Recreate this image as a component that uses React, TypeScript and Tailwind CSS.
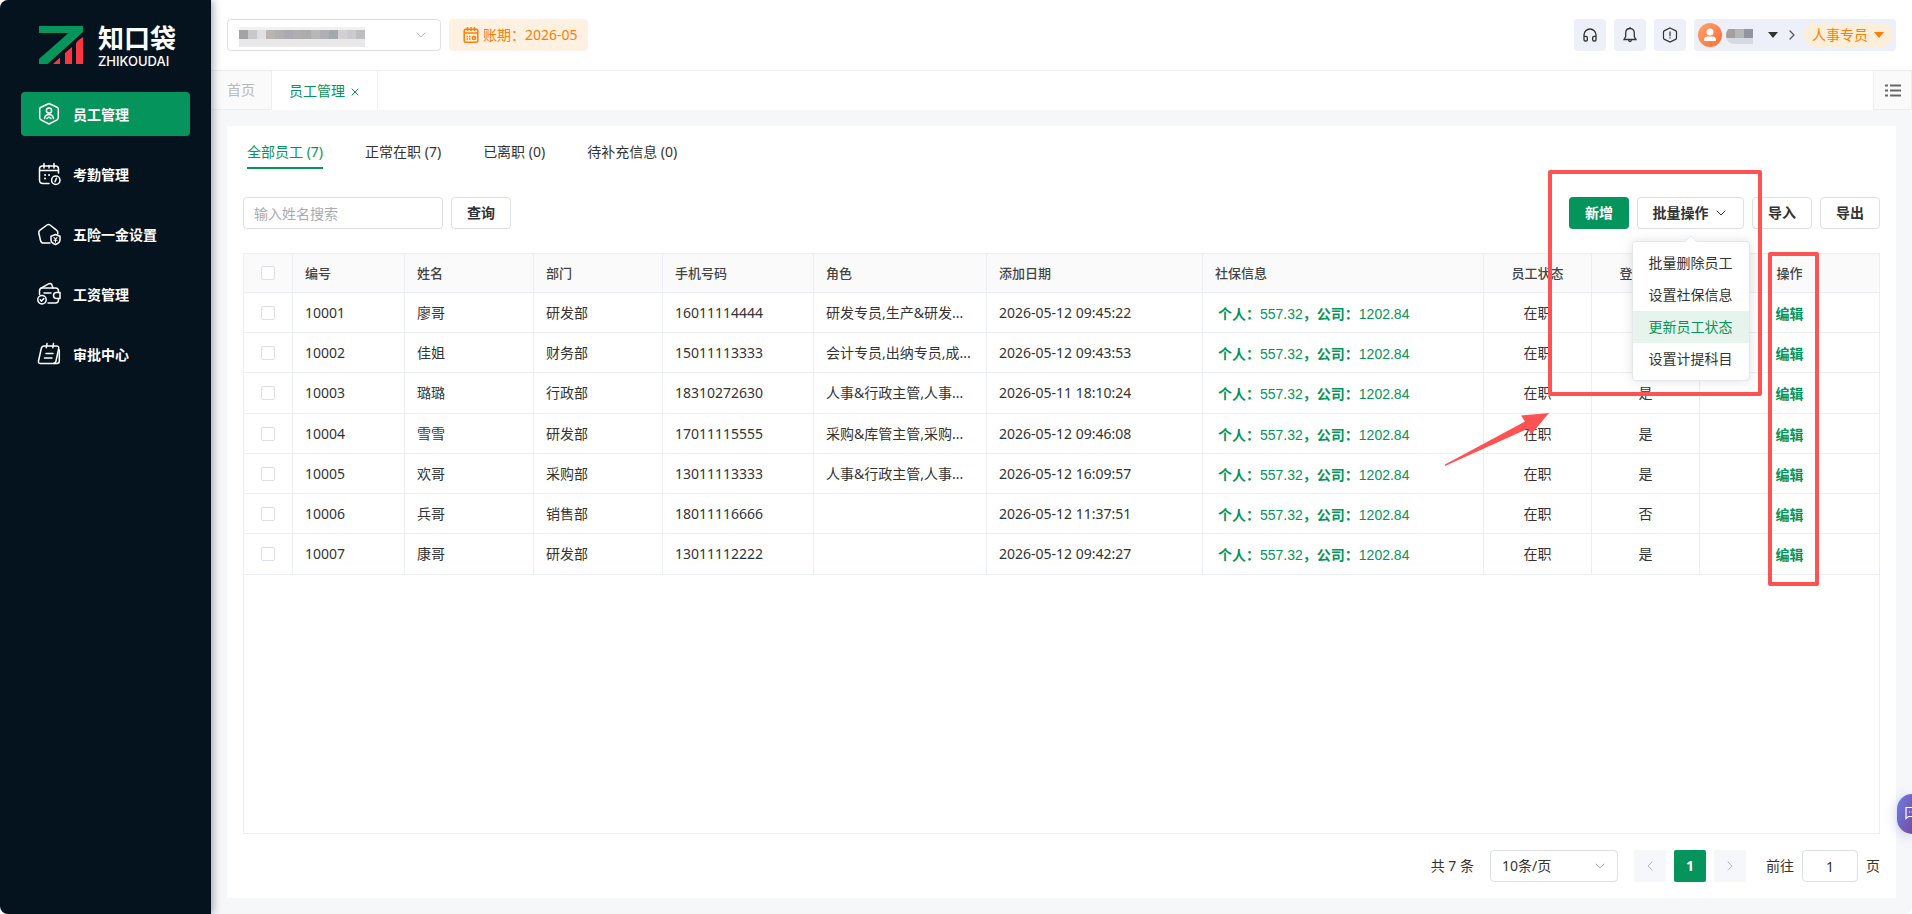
import type { ReactNode } from 'react';
import { ChevronDown, ChevronLeft, ChevronRight, Headphones, X } from 'lucide-react';

const NAME_MOSAIC = [
  '#a3a3a5', '#c8c8ca', '#e0e0e2', '#b8b4b0', '#b0b0b2', '#acaab0', '#b0aeb0',
  '#acacae', '#b8b6b6', '#b0b0b4', '#a4a8ac', '#d2d0d0', '#cccace', '#bebec2',
];

const STATUS_TABS = ['全部员工 (7)', '正常在职 (7)', '已离职 (0)', '待补充信息 (0)'];
const BATCH_ACTIONS = ['批量删除员工', '设置社保信息', '更新员工状态', '设置计提科目'];

type Employee = {
  id: string;
  name: string;
  dept: string;
  phone: string;
  role: string;
  addedAt: string;
  login: string;
};

const EMPLOYEES: Employee[] = [
  { id: '10001', name: '廖哥', dept: '研发部', phone: '16011114444', role: '研发专员,生产&研发...', addedAt: '2026-05-12 09:45:22', login: '是' },
  { id: '10002', name: '佳姐', dept: '财务部', phone: '15011113333', role: '会计专员,出纳专员,成...', addedAt: '2026-05-12 09:43:53', login: '是' },
  { id: '10003', name: '璐璐', dept: '行政部', phone: '18310272630', role: '人事&行政主管,人事...', addedAt: '2026-05-11 18:10:24', login: '是' },
  { id: '10004', name: '雪雪', dept: '研发部', phone: '17011115555', role: '采购&库管主管,采购...', addedAt: '2026-05-12 09:46:08', login: '是' },
  { id: '10005', name: '欢哥', dept: '采购部', phone: '13011113333', role: '人事&行政主管,人事...', addedAt: '2026-05-12 16:09:57', login: '是' },
  { id: '10006', name: '兵哥', dept: '销售部', phone: '18011116666', role: '', addedAt: '2026-05-12 11:37:51', login: '否' },
  { id: '10007', name: '康哥', dept: '研发部', phone: '13011112222', role: '', addedAt: '2026-05-12 09:42:27', login: '是' },
];

function MenuIcon({ children }: { children: ReactNode }) {
  return (
    <svg
      viewBox="0 0 24 24"
      className="size-6 shrink-0"
      fill="none"
      stroke="currentColor"
      strokeWidth="1.5"
      strokeLinecap="round"
      strokeLinejoin="round"
    >
      {children}
    </svg>
  );
}

const NAV = [
  {
    label: '员工管理',
    icon: (
      <MenuIcon>
        <path d="M12 1.5l8 3.7q1.3.7 1.3 2v8.600q0 1.400-1.300 2.100l-8 4.100-8-4.100q-1.300-.700-1.300-2.100V7.200q0-1.300 1.300-2z" />
        <circle cx="12" cy="8.500" r="2.600" />
        <path d="M7.500 16.500c.5-2.600 2.200-4 4.500-4s4 1.400 4.500 4M10 16.500l2-1.500 2 1.500" />
      </MenuIcon>
    ),
  },
  {
    label: '考勤管理',
    icon: (
      <MenuIcon>
        <path d="M21.500 11V7q0-3-3-3h-13q-3 0-3 3v11q0 3.500 3.500 3.500h6M2.500 8.500h19M7 1.500v4.500M12 3.500V6M17 1.500v4.500" />
        <path d="M8 13h.1M12 13h.1M8 16.500h.1" strokeWidth="1.900" />
        <circle cx="18.800" cy="18.200" r="4.200" />
        <path d="M19.500 16.200l-1.500 3.600" />
      </MenuIcon>
    ),
  },
  {
    label: '五险一金设置',
    icon: (
      <MenuIcon>
        <path d="M13 21H6.500q-2.500 0-3-2.500L1.800 11q-.3-1.800 1.200-2.900l7-5.100q1.500-1 3 0l6.500 5.100q1.500 1.100 1.300 2.900l-.1 1" />
        <path d="M18.500 12.500l4.500 1.800v3.700q0 2.800-4.500 4.500Q14 20.800 14 18v-3.700z" />
        <path d="M17 15.500l1.500 1.900 1.500-1.900M18.500 17.400v2.800M17 18.200h3" strokeWidth="1.100" />
      </MenuIcon>
    ),
  },
  {
    label: '工资管理',
    icon: (
      <MenuIcon>
        <path d="M2.500 12.500V9q0-3 3-3h13q3 0 3 3v1.500M21.500 16.500v1q0 3.500-3 3.500H11" />
        <path d="M3.500 6.300L12 1.700q1.800-.700 2.700.8L16 6M7 11h7" />
        <path d="M23 10.500h-3.500a3 3 0 000 6H23z" />
        <circle cx="5" cy="17.800" r="4.200" />
        <path d="M3.300 17.800l1.300 1.300 2.300-2.500" />
      </MenuIcon>
    ),
  },
  {
    label: '审批中心',
    icon: (
      <MenuIcon>
        <path d="M7 4h12.500q2.500 0 2.200 2.500L19 19q-.5 2.500-3 2.500H3.500q-2.500 0-2-2.500L4.300 6.500Q4.900 4 7 4z" />
        <path d="M10 1.500L9.300 5.700M16.500 1.500l-.7 4.200M9 11.500h7M7.500 16h7.500M22.300 8v11q0 2.500-2.500 2.500H17" />
      </MenuIcon>
    ),
  },
];

function Sidebar() {
  return (
    <aside className="relative z-10 w-[211px] shrink-0 bg-[#05131f] text-white shadow-[2px_0_8px_rgba(0,21,41,0.35)]">
      <div className="flex h-[92px] items-start gap-[15px] pt-6 pl-[39px]">
        <svg viewBox="0 0 44 38" className="mt-0.5 h-[38px] w-11">
          <path d="M0 0h44v6L8.500 38H0v-5L29.500 7H0z" fill="#06965c" />
          <path d="M14 38l7-6.500V38zM26 38V27l7-6v17zM37 38V17.500q1-3 7-6.500v27z" fill="#fb3640" />
        </svg>
        <div>
          <div className="text-[26px] leading-[28px] font-bold">知口袋</div>
          <div className="mt-0.5 font-[Inter] text-[13px] leading-[14px] font-medium">ZHIKOUDAI</div>
        </div>
      </div>
      <nav className="flex flex-col gap-4 px-[21px]">
        {NAV.map((item, i) => (
          <a
            key={item.label}
            href="#"
            className={`flex h-11 items-center gap-3 rounded px-4 text-sm font-bold ${i === 0 ? 'bg-[#05945b]' : ''}`}
          >
            {item.icon}
            <span className="pt-0.5">{item.label}</span>
          </a>
        ))}
      </nav>
    </aside>
  );
}

function Header() {
  return (
    <header className="flex h-[70px] items-center bg-white px-4">
      <div className="relative">
        <select aria-label="公司" className="h-8 w-[214px] appearance-none rounded border border-[#dcdfe6] bg-white" />
        <div className="pointer-events-none absolute top-2 left-3">
          <div className="h-[3px] w-[126px] bg-[#f1f1f2]" />
          <div className="flex">
            {NAME_MOSAIC.map((c) => (
              <span key={c} className="h-[9px] w-[9px]" style={{ background: c }} />
            ))}
          </div>
          <div className="h-2 w-[126px] bg-[#e9e9ea]" />
        </div>
        <ChevronDown className="pointer-events-none absolute top-2 right-3 size-4 text-[#b4b8bf]" strokeWidth={1.5} />
      </div>
      <button className="ml-2 flex h-8 items-center gap-1 rounded bg-[#fff1e2] pr-2.5 pl-3.5 text-sm text-[#ff7d00]">
        <svg viewBox="0 0 16 16" className="size-4" fill="none" stroke="currentColor" strokeWidth="1.500">
          <rect x="1.200" y="2.200" width="13.600" height="13" rx="1.500" />
          <path d="M1 6h14M4.500 0v4M8 0v4M11.500 0v4M3.500 9.500H5M6 9.500h1.500M3.500 12H5M6 12h1.500" />
          <circle cx="11" cy="11" r="1.600" />
        </svg>
        账期：2026-05
      </button>

      <div className="ml-auto flex items-center gap-2 text-[#333]">
        <button aria-label="客服" className="grid size-8 place-items-center rounded bg-[#edf0f8]">
          <Headphones className="size-4" strokeWidth={2} />
        </button>
        <button aria-label="通知" className="grid size-8 place-items-center rounded bg-[#edf0f8]">
          <svg viewBox="0 0 16 16" className="size-4" fill="none" stroke="currentColor" strokeWidth="1.300">
            <path d="M8 1.500c-3 0-4.300 2-4.300 4.500v3.500L2 12.500h12l-1.700-3V6C12.300 3.500 11 1.500 8 1.500zM8 0v1.500M6.500 12.700q.2 1.800 1.500 1.800t1.500-1.800" />
          </svg>
        </button>
        <button aria-label="提示" className="grid size-8 place-items-center rounded bg-[#edf0f8]">
          <svg viewBox="0 0 16 16" className="size-4" fill="none" stroke="currentColor" strokeWidth="1.200">
            <path d="M8 1l5.500 2.600q1 .5 1 1.500v5.800q0 1-1 1.500L8 15l-5.500-2.600q-1-.5-1-1.500V5.100q0-1 1-1.500z" />
            <path d="M8 4.500v4.700M8 10.300v1.200" />
          </svg>
        </button>
        <div className="flex h-8 items-center rounded bg-[#edf0f8] px-1">
          <svg viewBox="0 0 24 24" className="size-6">
            <defs>
              <linearGradient id="avatar" x1="0" y1="0" x2="1" y2="1">
                <stop offset="0" stopColor="#ffa56b" />
                <stop offset="1" stopColor="#ff6c36" />
              </linearGradient>
            </defs>
            <circle cx="12" cy="12" r="12" fill="url(#avatar)" />
            <circle cx="12" cy="9" r="3.500" fill="#fff" />
            <path d="M6 18v-1q0-3.500 3.500-3.500h5Q18 13.500 18 17v1z" fill="#fff" />
          </svg>
          <div className="ml-1 overflow-hidden rounded-l-lg">
            <div className="flex pt-0.5">
              <span className="h-[9px] w-[9px] bg-[#a5a09c]" />
              <span className="h-[9px] w-[9px] bg-[#b5b6ba]" />
              <span className="h-[9px] w-[9px] bg-[#9296a0]" />
            </div>
            <div className="h-1.5 bg-[#d6d9e0]" />
          </div>
          <svg viewBox="0 0 10 6" className="ml-[15px] h-1.5 w-2.5">
            <path d="M0 0h10L5 6z" fill="#333" />
          </svg>
          <ChevronRight className="mr-1 ml-1.5 size-4 text-[#555]" strokeWidth={1.8} />
          <button className="flex h-6 items-center gap-1.5 rounded-full bg-[#fdeeda] px-2 text-sm text-[#ff7d00]">
            人事专员
            <svg viewBox="0 0 10 6" className="h-1.5 w-2.5">
              <path d="M0 0h10L5 6z" fill="currentColor" />
            </svg>
          </button>
        </div>
      </div>
    </header>
  );
}

function PageTabs() {
  return (
    <div className="flex h-10 border-t border-[#eeeeef] bg-white text-sm">
      <a href="#" className="flex w-[61px] items-center border-r border-b border-[#eeeeef] bg-[#fafafa] pl-4 text-[#b8b8b8]">
        首页
      </a>
      <a href="#" className="flex w-[106px] items-center gap-1 border-r border-[#eeeeef] pl-[17px] text-[#05945b]">
        员工管理
        <X className="mt-0.5 size-3" strokeWidth={2} />
      </a>
      <button aria-label="标签列表" className="ml-auto grid w-[39px] place-items-center border border-t-0 border-[#eeeeef] bg-[#fafafa]">
        <svg viewBox="0 0 16 13" className="h-[13px] w-4" stroke="#666" strokeWidth="2">
          <path d="M0 1.500h3M5 1.500h11M0 6.500h3M5 6.500h11M0 11.500h3M5 11.500h11" />
        </svg>
      </button>
    </div>
  );
}

const btn = 'h-8 w-15 rounded border border-[#dcdfe6] bg-white text-sm font-bold text-[#333]';

function Toolbar() {
  return (
    <div className="mt-7 flex h-8 items-center gap-2">
      <input
        aria-label="输入姓名搜索"
        placeholder="输入姓名搜索"
        className="h-8 w-[200px] rounded border border-[#dcdfe6] px-2.5 text-sm placeholder:text-[#a8abb2]"
      />
      <button className={btn}>查询</button>
      <button className="ml-auto h-8 w-15 rounded bg-[#05945b] text-sm font-bold text-white">新增</button>
      <div className="relative">
        <button className="flex h-8 w-[107px] items-center justify-center gap-1 rounded border border-[#dcdfe6] bg-white text-sm font-bold text-[#333]">
          批量操作
          <ChevronDown className="size-4" strokeWidth={1.5} />
        </button>
        <div className="absolute top-11 left-1/2 z-20 w-[118px] -translate-x-1/2 rounded border border-[#e4e7ed] bg-white py-[5px] shadow-[0_0_12px_rgba(0,0,0,0.12)]">
          <span className="absolute -top-[5px] left-1/2 size-2.5 -translate-x-1/2 rotate-45 rounded-tl-xs border-t border-l border-[#e4e7ed] bg-white" />
          {BATCH_ACTIONS.map((action) => (
            <button
              key={action}
              className={`relative block h-8 w-full text-center text-sm ${
                action === '更新员工状态' ? 'bg-[#e6f4ed] text-[#05945b]' : 'text-[#333]'
              }`}
            >
              {action}
            </button>
          ))}
        </div>
      </div>
      <button className={btn}>导入</button>
      <button className={btn}>导出</button>
    </div>
  );
}

function Check({ label }: { label: string }) {
  return (
    <input
      type="checkbox"
      aria-label={label}
      className="block size-3.5 appearance-none rounded-xs border border-[#dcdfe6] bg-white"
    />
  );
}

function EmployeeTable() {
  return (
    <div className="mt-6 flex-1 border border-[#ebeef5]">
      <table className="w-full table-fixed border-separate border-spacing-0 text-left text-sm text-[#333] [&_td]:border-b [&_td]:border-[#ebeef5] [&_td]:px-3 [&_td]:not-last:border-r [&_th]:border-b [&_th]:border-[#ebeef5] [&_th]:px-3 [&_th]:not-last:border-r">
        <colgroup>
          <col className="w-[49px]" />
          <col className="w-28" />
          <col className="w-[129px]" />
          <col className="w-[129px]" />
          <col className="w-[151px]" />
          <col className="w-[173px]" />
          <col className="w-[216px]" />
          <col />
          <col className="w-[108px]" />
          <col className="w-[108px]" />
          <col className="w-[179px]" />
        </colgroup>
        <thead>
          <tr className="h-[39px] bg-[#fafafa] text-[13px] text-[#444] [&_th]:font-medium">
            <th><div className="flex justify-center"><Check label="全选" /></div></th>
            <th>编号</th>
            <th>姓名</th>
            <th>部门</th>
            <th>手机号码</th>
            <th>角色</th>
            <th>添加日期</th>
            <th>社保信息</th>
            <th className="text-center">员工状态</th>
            <th className="text-center">登录权限</th>
            <th className="text-center">操作</th>
          </tr>
        </thead>
        <tbody>
          {EMPLOYEES.map((e) => (
            <tr key={e.id} className="h-10 nth-[4n+3]:h-[41px]">
              <td><div className="flex justify-center"><Check label={e.name} /></div></td>
              <td>{e.id}</td>
              <td>{e.name}</td>
              <td>{e.dept}</td>
              <td>{e.phone}</td>
              <td className="whitespace-nowrap">{e.role}</td>
              <td>{e.addedAt}</td>
              <td>
                <a href="#" className="ml-[3px] inline-block pt-0.5 font-['Liberation_Sans','Noto_Sans_CJK_SC',sans-serif] text-[#05945b]">
                  <b>个人：</b>557.32<b>，公司：</b>1202.84
                </a>
              </td>
              <td className="text-center">在职</td>
              <td className="text-center">{e.login}</td>
              <td className="text-center">
                <button className="pt-0.5 font-bold text-[#05945b]">编辑</button>
              </td>
            </tr>
          ))}
        </tbody>
      </table>
    </div>
  );
}

function Pagination() {
  return (
    <div className="mt-4 flex h-8 items-center justify-end text-sm text-[#333]">
      <span className="mr-4">共 7 条</span>
      <div className="relative mr-4">
        <select aria-label="每页条数" className="h-8 w-32 appearance-none rounded border border-[#dcdfe6] bg-white px-[11px]">
          <option>10条/页</option>
        </select>
        <ChevronDown className="pointer-events-none absolute top-2 right-2.5 size-4 text-[#a8abb2]" strokeWidth={1.5} />
      </div>
      <div className="flex gap-2">
        <button aria-label="上一页" className="grid size-8 place-items-center rounded-xs bg-[#f5f7fa] text-[#b4b8bf]">
          <ChevronLeft className="size-4" strokeWidth={1.5} />
        </button>
        <button className="size-8 rounded-xs bg-[#05945b] font-bold text-white">1</button>
        <button aria-label="下一页" className="grid size-8 place-items-center rounded-xs bg-[#f5f7fa] text-[#b4b8bf]">
          <ChevronRight className="size-4" strokeWidth={1.5} />
        </button>
      </div>
      <label className="ml-5 flex items-center gap-2">
        前往
        <input defaultValue="1" className="h-8 w-14 rounded border border-[#dcdfe6] text-center" />
        页
      </label>
    </div>
  );
}

// 操作指引标注
function Guides() {
  return (
    <div className="pointer-events-none">
      <div className="absolute top-[170px] right-[150px] z-30 h-[226px] w-[214px] rounded-xs border-4 border-[#ff5353]" />
      <div className="absolute top-[252px] right-[93px] z-30 h-[334px] w-[51px] rounded-xs border-4 border-[#ff5353]" />
      <svg viewBox="0 0 104 53" className="absolute top-[413px] right-[363px] z-30 h-[53px] w-[104px]">
        <path d="M0 51.500L80 8.500 76 2.500 104 0 86 21.500 83 15.500 0 53z" fill="#ff5353" />
      </svg>
    </div>
  );
}

export default function App() {
  return (
    <div className="min-h-screen bg-white font-['Noto_Sans','Noto_Sans_CJK_SC',sans-serif]">
      <div className="relative flex min-h-screen overflow-hidden rounded-lg bg-[#f6f7f9]">
        <Sidebar />
        <div className="flex min-w-0 flex-1 flex-col">
          <Header />
          <PageTabs />
          <main className="m-4 flex flex-1 flex-col bg-white p-4">
            <div className="flex gap-[42px] pl-1 text-sm text-[#333]">
              {STATUS_TABS.map((tab, i) => (
                <button
                  key={tab}
                  className={`h-[27px] border-b-2 pb-[5px] ${i === 0 ? 'border-[#05945b] text-[#05945b]' : 'border-transparent'}`}
                >
                  {tab}
                </button>
              ))}
            </div>
            <Toolbar />
            <EmployeeTable />
            <Pagination />
          </main>
        </div>
        <Guides />
        <button
          aria-label="在线咨询"
          className="absolute right-0 bottom-20 z-20 h-10 w-[15px] overflow-hidden rounded-l-full bg-linear-to-br from-[#667eea] to-[#764ba2] shadow-[0_2px_12px_rgba(102,126,234,0.4)]"
        >
          <svg viewBox="0 0 14 14" className="absolute top-3 left-2 size-3.5" fill="none" stroke="#fff" strokeWidth="1.200">
            <path d="M1 1.500h12v9H3.500L1 12.500zM4 6h1M6.500 6h1M9 6h1" />
          </svg>
        </button>
      </div>
    </div>
  );
}
